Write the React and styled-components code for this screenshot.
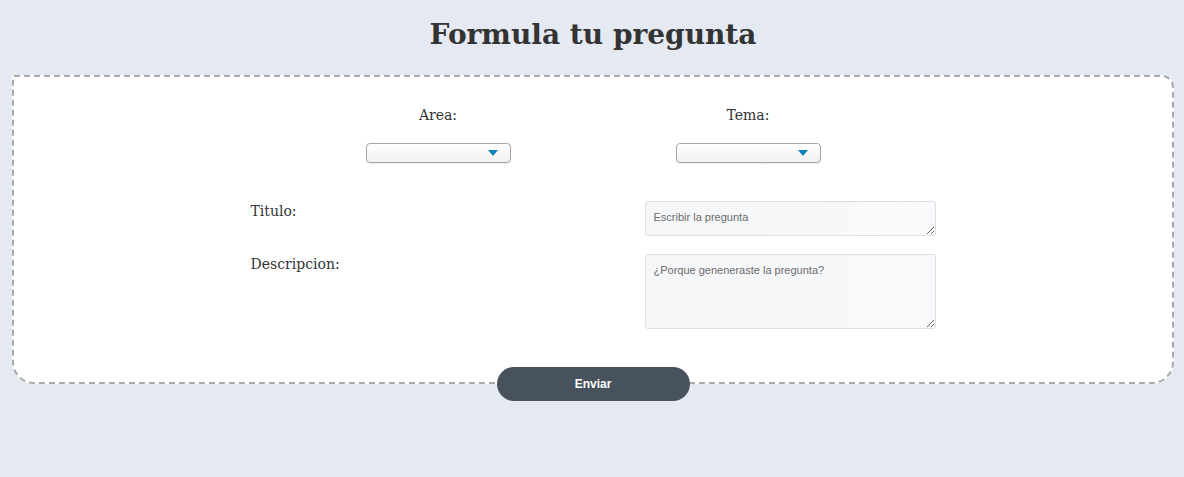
import React from "react";
import styled, { createGlobalStyle } from "styled-components";

const GlobalStyle = createGlobalStyle`
  html, body {
    margin: 0;
    padding: 0;
    background: #e5e9f2;
    min-height: 100%;
  }
  body {
    font-family: "DejaVu Serif", Georgia, serif;
    color: #333;
  }
`;

const App = () => {
  return (
    <>
      <GlobalStyle />
      <Wrapper>
        <Title>Formula tu pregunta</Title>
        <Card>
          <SelectRow>
            <SelectGroup>
              <Label>Area:</Label>
              <FakeSelect>
                <Caret />
              </FakeSelect>
            </SelectGroup>
            <SelectGroup>
              <Label>Tema:</Label>
              <FakeSelect>
                <Caret />
              </FakeSelect>
            </SelectGroup>
          </SelectRow>
          <Fields>
            <FieldLabel htmlFor="titulo">Titulo:</FieldLabel>
            <TextArea id="titulo" height={35} placeholder="Escribir la pregunta" />
            <FieldLabel htmlFor="descripcion">Descripcion:</FieldLabel>
            <TextArea
              id="descripcion"
              height={75}
              placeholder="¿Porque geneneraste la pregunta?"
            />
          </Fields>
        </Card>
        <SubmitButton type="button">Enviar</SubmitButton>
      </Wrapper>
    </>
  );
};

const Wrapper = styled.div`
  display: flex;
  flex-direction: column;
  align-items: center;
  min-height: 477px;
  padding: 0 10px 0 12px;
  box-sizing: border-box;
`;

const Title = styled.h1`
  margin: 15px 0 20px;
  font-family: Georgia, "DejaVu Serif", serif;
  font-size: 28px;
  font-weight: bold;
  color: #333;
  line-height: 40px;
`;

const Card = styled.section`
  align-self: stretch;
  background: #fff;
  border: 2px dashed #a9a9a9;
  border-radius: 2px 12px 22px 22px;
  padding: 27px 0 53px;
  box-sizing: border-box;
`;

const SelectRow = styled.div`
  display: flex;
  justify-content: center;
  gap: 165px;
`;

const SelectGroup = styled.div`
  width: 145px;
  display: flex;
  flex-direction: column;
  align-items: center;
  gap: 17px;
`;

const Label = styled.span`
  font-size: 14px;
  line-height: 22px;
  color: #333;
`;

const FakeSelect = styled.div`
  width: 145px;
  height: 20px;
  box-sizing: border-box;
  border: 1px solid #a6a6a6;
  border-radius: 4px;
  background: linear-gradient(#ffffff, #f1f1f1);
  box-shadow: 0 1px 1px rgba(0, 0, 0, 0.08);
  display: flex;
  align-items: center;
  justify-content: flex-end;
  padding-right: 12px;
`;

const Caret = styled.span`
  width: 0;
  height: 0;
  border-left: 5px solid transparent;
  border-right: 5px solid transparent;
  border-top: 6px solid #137fb8;
`;

const Fields = styled.div`
  display: grid;
  grid-template-columns: 394px 291px;
  justify-content: center;
  row-gap: 18px;
  margin-top: 38px;
`;

const FieldLabel = styled.label`
  font-size: 14px;
  line-height: 20px;
  color: #333;
`;

const TextArea = styled.textarea`
  height: ${(p) => p.height}px;
  box-sizing: border-box;
  border: 1px solid #dcdfe3;
  border-radius: 3px;
  background: linear-gradient(90deg, #f5f6f8, #f8f9fb);
  padding: 9px 8px;
  font-family: "Liberation Sans", Arial, sans-serif;
  font-size: 11px;
  color: #333;
  resize: vertical;
  &::placeholder {
    color: #6b6b6b;
  }
`;

const SubmitButton = styled.button`
  position: relative;
  margin-top: -17px;
  width: 193px;
  height: 34px;
  border: none;
  border-radius: 17px;
  background: #48525d;
  color: #fff;
  font-family: "Liberation Sans", Arial, sans-serif;
  font-size: 12px;
  font-weight: bold;
  cursor: pointer;
`;

export default App;
